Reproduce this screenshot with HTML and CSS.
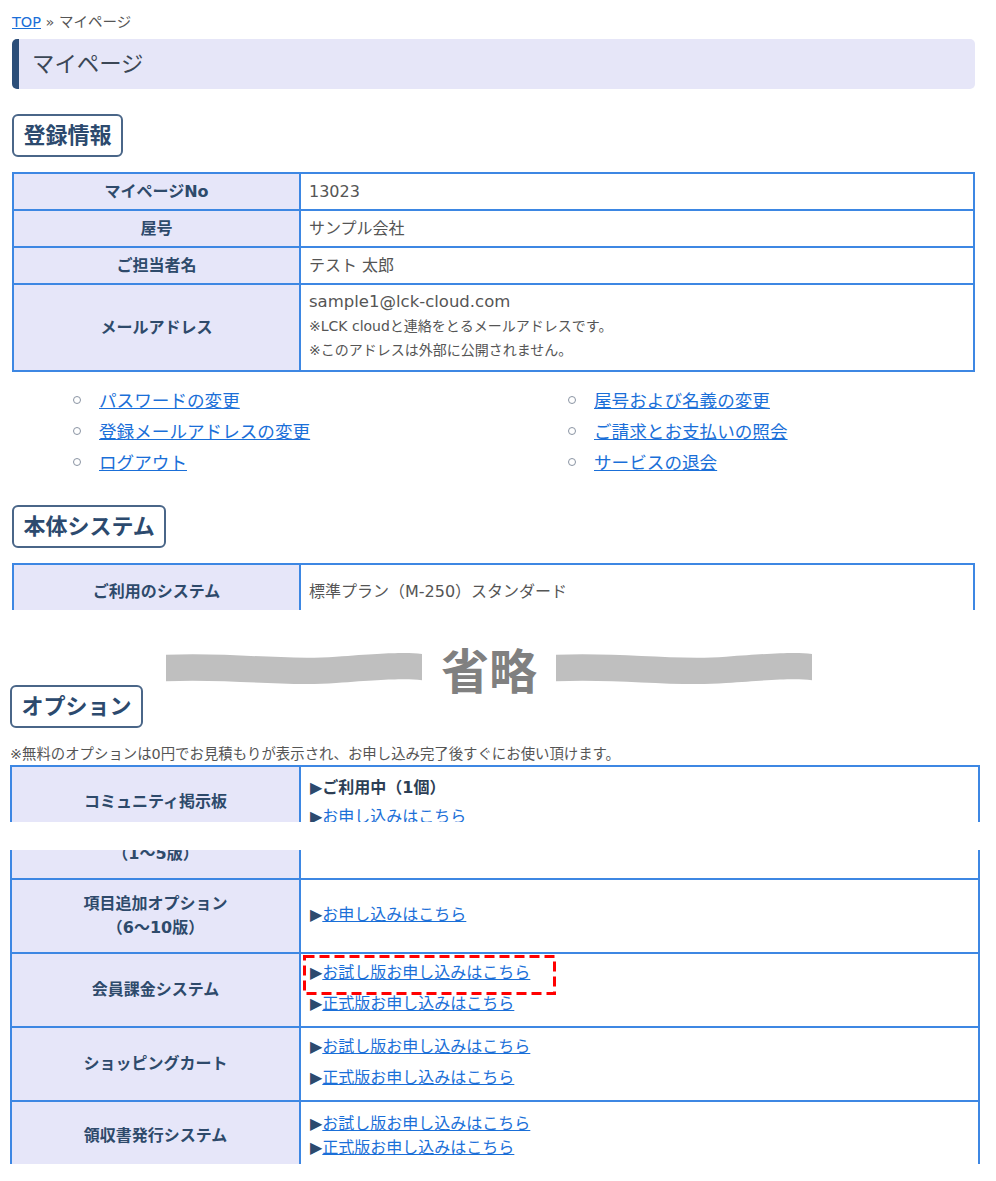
FILE: index.html
```html
<!DOCTYPE html>
<html lang="ja">
<head>
<meta charset="utf-8">
<title>マイページ</title>
<link rel="stylesheet" href="styles.css">
</head>
<body>
<div class="page-a">
  <div class="crumb"><a href="#">TOP</a> » マイページ</div>
  <h1 class="page-title">マイページ</h1>

  <h2 class="sec">登録情報</h2>
  <table class="info">
    <colgroup><col class="hcol"><col></colgroup>
    <tr><th>マイページNo</th><td>13023</td></tr>
    <tr><th>屋号</th><td>サンプル会社</td></tr>
    <tr><th>ご担当者名</th><td>テスト 太郎</td></tr>
    <tr><th>メールアドレス</th><td class="mail-cell"><div class="mail">sample1@lck-cloud.com</div><div class="small">※LCK cloudと連絡をとるメールアドレスです。</div><div class="small">※このアドレスは外部に公開されません。</div></td></tr>
  </table>

  <div class="links">
    <ul>
      <li><a href="#">パスワードの変更</a></li>
      <li><a href="#">登録メールアドレスの変更</a></li>
      <li><a href="#">ログアウト</a></li>
    </ul>
    <ul>
      <li><a href="#">屋号および名義の変更</a></li>
      <li><a href="#">ご請求とお支払いの照会</a></li>
      <li><a href="#">サービスの退会</a></li>
    </ul>
  </div>

  <h2 class="sec sec-gap">本体システム</h2>
  <div class="clip clip-sys">
    <table class="info sys">
      <colgroup><col class="hcol"><col></colgroup>
      <tr><th>ご利用のシステム</th><td>標準プラン（M-250）スタンダード</td></tr>
    </table>
  </div>

  <div class="omit">
    <svg width="256" height="33" viewBox="0 0 256 35" preserveAspectRatio="none"><path d="M0 3 C60 0 120 9 170 5 S240 0 256 2 L256 30 C240 28 220 29 170 33 C120 37 60 28 0 31 Z" fill="#bfbfbf"/></svg>
    <span>省略</span>
    <svg width="256" height="33" viewBox="0 0 256 35" preserveAspectRatio="none"><path d="M0 3 C60 0 120 9 170 5 S240 0 256 2 L256 30 C240 28 220 29 170 33 C120 37 60 28 0 31 Z" fill="#bfbfbf"/></svg>
  </div>
</div>

<div class="page-b">
  <h2 class="sec">オプション</h2>
  <p class="note">※無料のオプションは0円でお見積もりが表示され、お申し込み完了後すぐにお使い頂けます。</p>

  <div class="clip clip-a">
    <table class="opt">
      <colgroup><col class="hcol"><col></colgroup>
      <tr class="tight">
        <th>コミュニティ掲示板</th>
        <td><div class="ln using"><span class="tri">▶</span>ご利用中（1個）</div><div class="ln"><span class="tri">▶</span><a href="#">お申し込みはこちら</a></div></td>
      </tr>
    </table>
  </div>

  <div class="clip clip-b">
    <table class="opt shift">
      <colgroup><col class="hcol"><col></colgroup>
      <tr>
        <th>項目追加オプション<br>（1〜5版）</th>
        <td><div class="ln"><span class="tri">▶</span><a href="#">お申し込みはこちら</a></div></td>
      </tr>
      <tr>
        <th>項目追加オプション<br>（6〜10版）</th>
        <td><div class="ln"><span class="tri">▶</span><a href="#">お申し込みはこちら</a></div></td>
      </tr>
      <tr>
        <th>会員課金システム</th>
        <td class="markcell"><div class="ln"><span class="tri">▶</span><a href="#">お試し版お申し込みはこちら</a></div><div class="ln"><span class="tri">▶</span><a href="#">正式版お申し込みはこちら</a></div>
          <svg class="mark" width="253" height="40" viewBox="0 0 253 40"><rect x="1.5" y="1.5" width="250" height="37" fill="none" stroke="#ff0000" stroke-width="3" stroke-dasharray="10 5"/></svg>
        </td>
      </tr>
      <tr>
        <th>ショッピングカート</th>
        <td><div class="ln"><span class="tri">▶</span><a href="#">お試し版お申し込みはこちら</a></div><div class="ln"><span class="tri">▶</span><a href="#">正式版お申し込みはこちら</a></div></td>
      </tr>
      <tr class="stack">
        <th>領収書発行システム</th>
        <td><div class="ln"><span class="tri">▶</span><a href="#">お試し版お申し込みはこちら</a></div><div class="ln"><span class="tri">▶</span><a href="#">正式版お申し込みはこちら</a></div></td>
      </tr>
    </table>
  </div>
</div>
</body>
</html>
```

FILE: styles.css
```css
body {
  margin: 0;
  background: #fff;
  color: #555;
  font-family: "DejaVu Sans", "Noto Sans CJK JP", sans-serif;
}

a {
  color: #1a6fd8;
  text-decoration: underline;
}

.page-a {
  margin: 0 21px 0 12px;
}

.crumb {
  padding-top: 12px;
  font-size: 14.5px;
  line-height: 20px;
  color: #555;
}

.page-title {
  margin: 7px 0 0;
  height: 50px;
  box-sizing: border-box;
  background: #e6e6f8;
  border-left: 7px solid #2b4e79;
  border-radius: 5px;
  padding-left: 13px;
  font-size: 22.4px;
  font-weight: normal;
  line-height: 50px;
  color: #3b4756;
}

.sec {
  width: fit-content;
  margin: 25px 0 15px;
  padding: 6px 9.5px;
  border: 2px solid #4a6688;
  border-radius: 6px;
  font-size: 22px;
  line-height: 27px;
  font-weight: bold;
  color: #2c4a6e;
}

.sec-gap {
  margin-top: 26px;
}

/* tables */
.info,
.opt {
  width: 100%;
  table-layout: fixed;
  border-collapse: separate;
  border-spacing: 0;
  border-top: 2px solid #3d87e3;
  border-left: 2px solid #3d87e3;
}

.info .hcol {
  width: 287px;
}

.opt .hcol {
  width: 289px;
}

.info th,
.info td {
  border-right: 2px solid #3d87e3;
  border-bottom: 2px solid #3d87e3;
  padding: 5px 8px;
  font-size: 16px;
  line-height: 25px;
}

.info th,
.opt th {
  background: #e6e6f9;
  color: #2e4a6b;
  font-weight: bold;
  text-align: center;
}

.info td {
  color: #555;
  text-align: left;
}

.info td.mail-cell {
  padding-top: 5px;
  padding-bottom: 8px;
}

.mail {
  font-size: 16.5px;
  line-height: 24px;
}

.small {
  font-size: 14px;
  line-height: 24px;
}

/* links */
.links {
  display: flex;
  margin-top: 14px;
}

.links ul {
  flex: 0 0 495px;
  box-sizing: border-box;
  margin: 0;
  padding-left: 61px;
  list-style: none;
}

.links li {
  font-size: 17.6px;
  line-height: 31px;
}

.links li::before {
  content: "";
  display: inline-block;
  width: 6px;
  height: 6px;
  border: 1px solid #8a94a3;
  border-radius: 50%;
  margin-right: 18px;
  vertical-align: 3px;
}

.clip {
  overflow: hidden;
}

.clip-sys {
  height: 47px;
}

.sys th,
.sys td {
  padding-top: 14px;
  padding-bottom: 14px;
}

/* omitted band */
.omit {
  display: flex;
  align-items: center;
  gap: 19px;
  padding-left: 154px;
  margin-top: 41px;
  height: 34px;
}

.omit svg {
  display: block;
  flex: none;
}

.omit span {
  font-family: "Noto Sans CJK JP", sans-serif;
  font-weight: bold;
  font-size: 48px;
  line-height: 34px;
  color: #808080;
}

/* options */
.page-b {
  margin-left: 10px;
  width: 970px;
}

.page-b .sec {
  margin: 0;
}

.note {
  margin: 16px 0 1px;
  font-size: 14.4px;
  line-height: 20px;
  color: #555;
}

.opt th,
.opt td {
  border-right: 2px solid #3d87e3;
  border-bottom: 2px solid #3d87e3;
  font-size: 16px;
  line-height: 24px;
}

.opt th {
  padding: 12px 8px;
}

.opt td {
  padding: 7px 9px 10px;
  text-align: left;
  color: #2c3e55;
}

.ln + .ln {
  margin-top: 7px;
}

.tight td {
  padding-top: 9px;
  padding-bottom: 8px;
}

.tight .ln + .ln {
  margin-top: 5px;
}

.stack td {
  padding-top: 10px;
}

.stack .ln + .ln {
  margin-top: 0;
}

.tri {
  color: #2c4a6e;
}

.using {
  font-weight: bold;
}

.clip-a {
  height: 57px;
  margin-bottom: 28px;
}

.clip-b {
  height: 314px;
}

.shift {
  margin-top: -46px;
}

.markcell {
  position: relative;
}

.mark {
  position: absolute;
  left: 2px;
  top: 1px;
}
```
